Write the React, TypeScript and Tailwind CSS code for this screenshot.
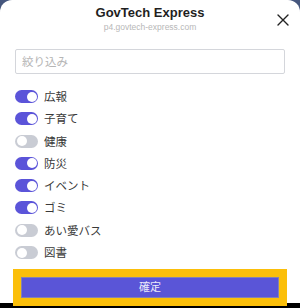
import React, { useState } from "react";

const items: { label: string; on: boolean }[] = [
  { label: "広報", on: true },
  { label: "子育て", on: true },
  { label: "健康", on: false },
  { label: "防災", on: true },
  { label: "イベント", on: true },
  { label: "ゴミ", on: true },
  { label: "あい愛バス", on: false },
  { label: "図書", on: false },
];

function Toggle({ on }: { on: boolean }) {
  return (
    <div
      className={
        "w-[23px] h-[13px] rounded-full p-[1.5px] flex items-center " +
        (on ? "bg-[#5b54d9] justify-end" : "bg-[#c9ccd4] justify-start")
      }
    >
      <div className="w-[10px] h-[10px] rounded-full bg-white" />
    </div>
  );
}

export default function App() {
  const [state] = useState(items);
  return (
    <div
      className="w-[300px] h-[308px] overflow-hidden bg-gradient-to-b from-[#46577f] via-[#1c2233] to-black"
      style={{ fontFamily: '"Noto Sans", "Noto Sans CJK JP", sans-serif' }}
    >
      <div className="w-[300px] h-[303px] bg-white rounded-t-[12px] flex flex-col relative">
        <div className="flex flex-col items-center pt-[5px] h-[40px]">
          <div
            className="text-[13px] font-bold text-[#1f1f1f] leading-[16px]"
            style={{ fontFamily: '"Liberation Sans", Arial, sans-serif' }}
          >
            GovTech Express
          </div>
          <div
            className="text-[8.5px] text-[#b8b8b8] leading-[11px] mt-[1px]"
            style={{ fontFamily: '"Liberation Sans", Arial, sans-serif' }}
          >
            p4.govtech-express.com
          </div>
        </div>
        <button className="absolute left-[276px] top-[13px] w-[14px] h-[14px]">
          <svg viewBox="0 0 14 14" width="14" height="14">
            <path d="M2 2 L12 12 M12 2 L2 12" stroke="#222" strokeWidth="1.4" strokeLinecap="round" />
          </svg>
        </button>
        <div className="px-[15px] mt-[9px]">
          <div className="h-[25px] border border-[#d4d6db] rounded-[2px] flex items-center px-[6px]">
            <span className="text-[11.5px] text-[#b5b5b5]">絞り込み</span>
          </div>
        </div>
        <div className="flex flex-col px-[15px] mt-[16px] gap-[9.3px]">
          {state.map((it) => (
            <div key={it.label} className="flex items-center gap-[6px] h-[13px]">
              <Toggle on={it.on} />
              <span className="text-[11.5px] text-[#3a3a3a] leading-[13px]">{it.label}</span>
            </div>
          ))}
        </div>
        <div className="px-[21px] mt-auto mb-[5px]">
          <button className="w-full h-[21px] bg-[#5a55d7] border border-[#8482b0] outline-[8px] outline-solid outline-[#fbbf0a] text-[#ecebfa] text-[11px] flex items-center justify-center">
            確定
          </button>
        </div>
      </div>
    </div>
  );
}
